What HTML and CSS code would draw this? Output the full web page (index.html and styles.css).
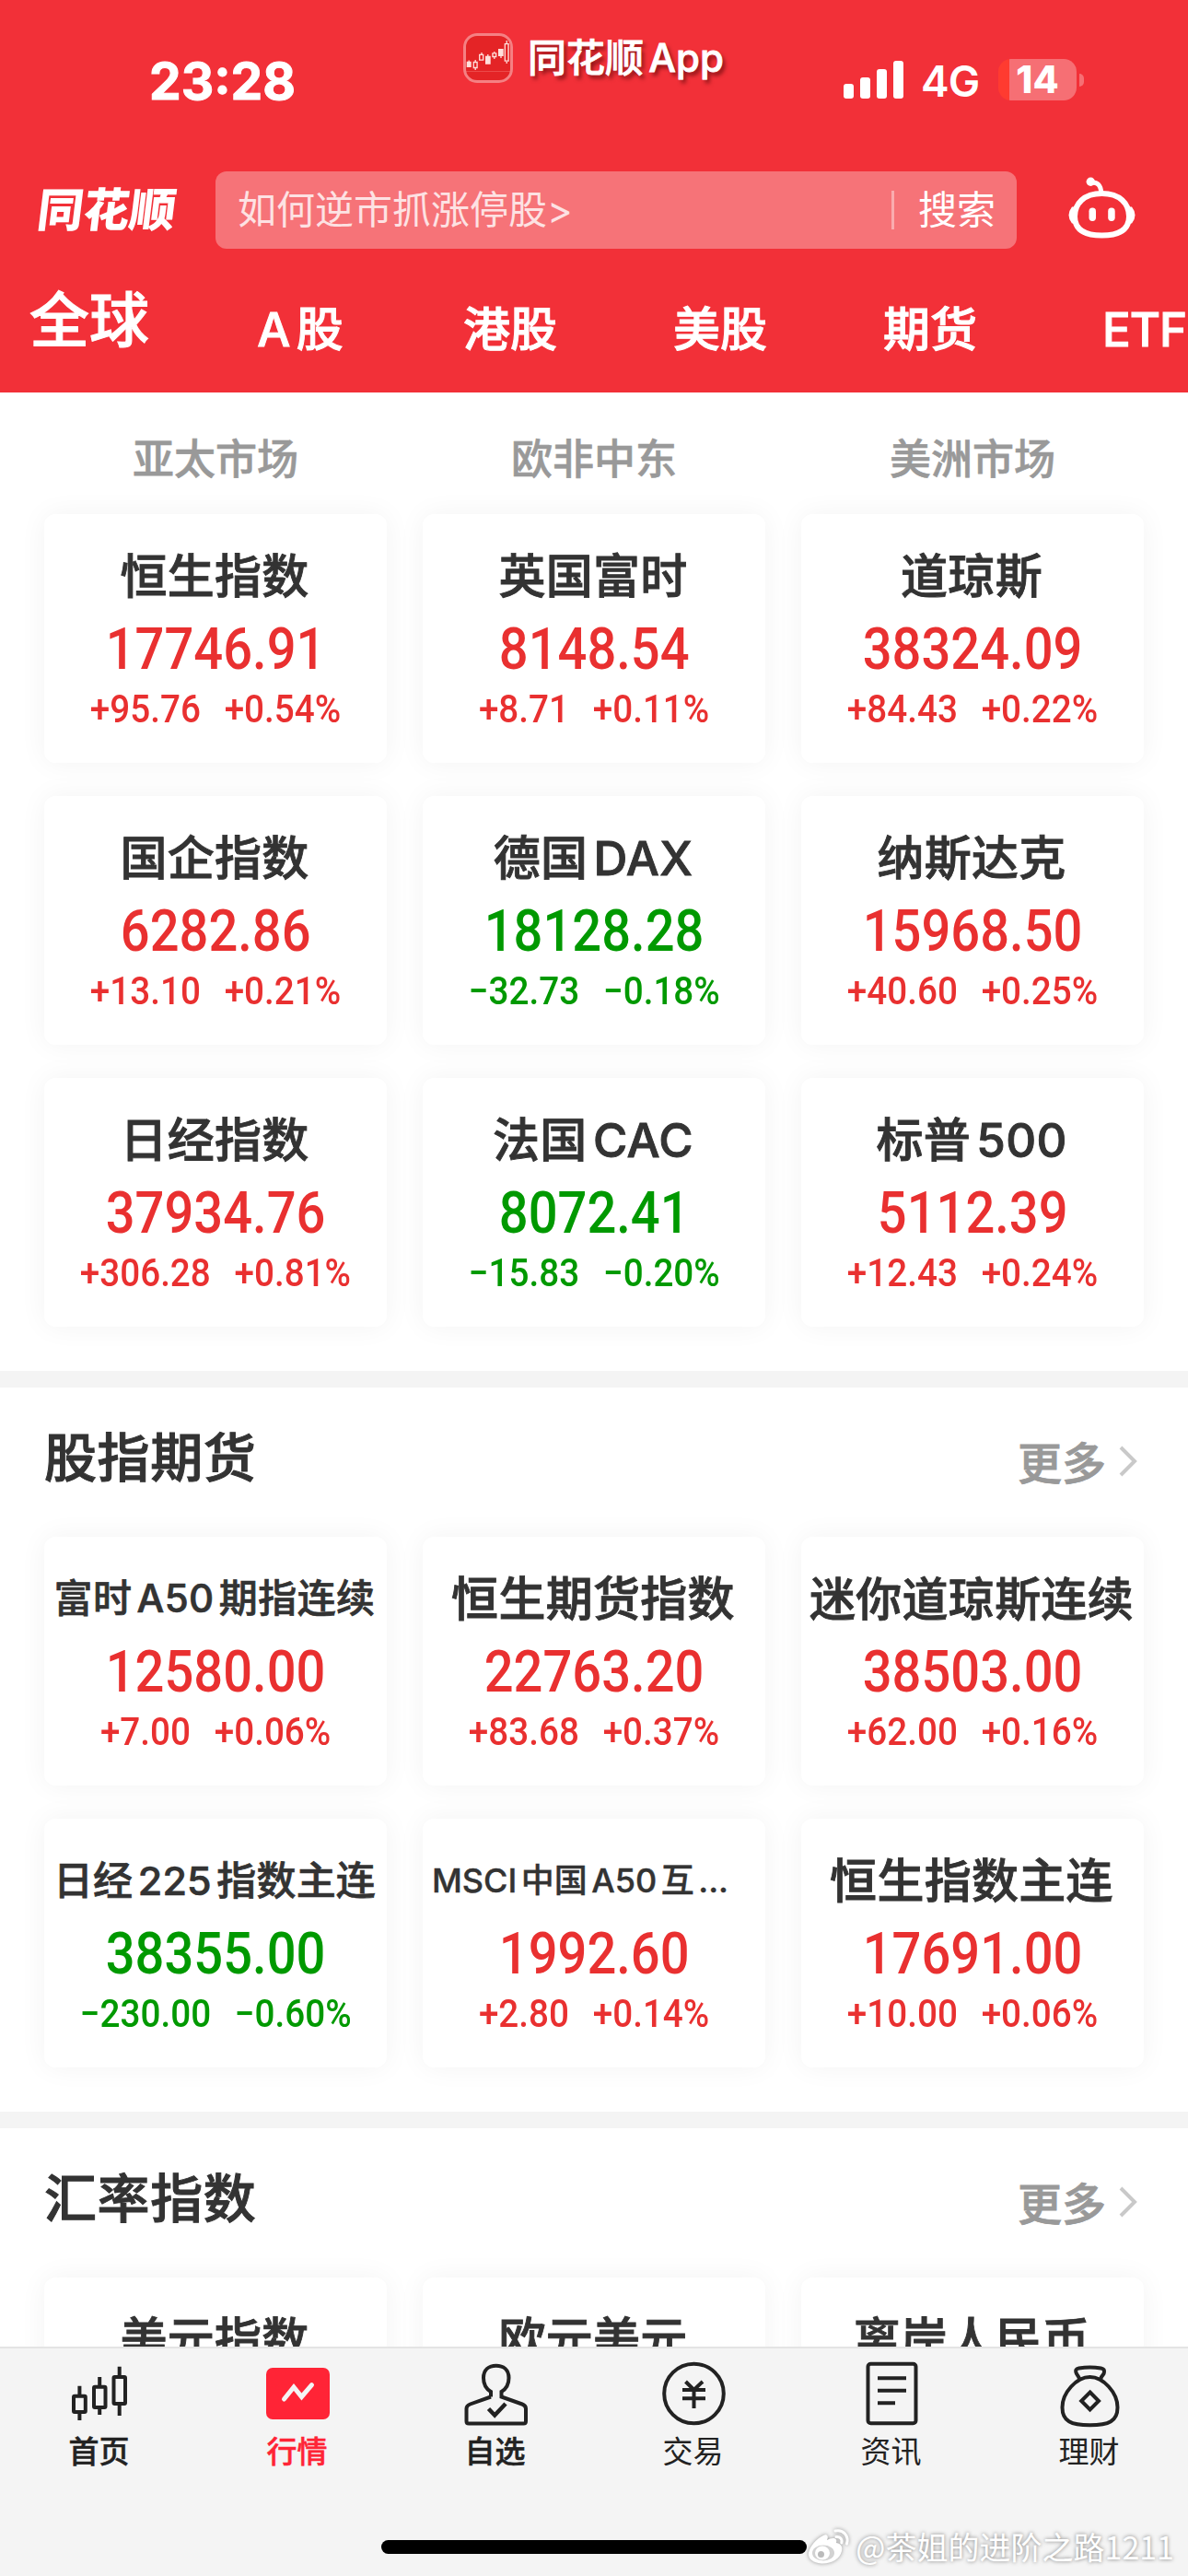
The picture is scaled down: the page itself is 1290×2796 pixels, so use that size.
FILE: index.html
```
<!DOCTYPE html>
<html lang="zh-CN">
<head>
	<meta charset="utf-8">
	<title>同花顺 - 全球行情</title>
	<link rel="stylesheet" href="styles.css">
</head>
<body>
	<header class="header">
		<div class="status-bar">
			<div class="time">23:28</div>
			<div class="app-tag">
				<svg class="app-icon" viewBox="0 0 54 54">
					<rect width="54" height="54" rx="15" fill="#e42426"/>
					<path d="M2 41.500H52" stroke="#ec4a4a" stroke-width="1"/>
					<path d="M6.200 29.500V31M13.200 29V31M13.200 38V40M20 21V23M26.800 23V25M33.800 20V21.500M33.800 26V28M41 25V27M47.200 8V11M47.200 31V33" stroke="#ffe0dc" stroke-width="1.300"/>
					<path d="M3.700 30.700H8.700V37H3.700ZM24 24.700H29.700V33.700H24ZM38 17H43.700V25H38Z" fill="#ffe0dc"/>
					<path d="M11.300 31.500H15.100V37.500H11.300ZM17.700 23.300H21.700V29.100H17.700ZM31.900 21.900H35.700V25.500H31.900ZM45.300 11.600H49.100V30.200H45.300Z" fill="none" stroke="#ffe0dc" stroke-width="1.300"/>
					<rect x="1.500" y="1.500" width="51" height="51" rx="13.500" fill="none" stroke="#f58083" stroke-width="3"/>
				</svg>
				<span>同花顺App</span>
			</div>
			<div class="signals">
				<svg class="bars" viewBox="0 0 66 42" fill="#fff">
					<rect x="0" y="25" width="11" height="16" rx="3"/>
					<rect x="18" y="18" width="11" height="23" rx="3"/>
					<rect x="36" y="9" width="11" height="32" rx="3"/>
					<rect x="54" y="0" width="11" height="41" rx="3"/>
				</svg>
				<span class="network">4G</span>
				<div class="battery">14</div>
				<div class="battery-tip"></div>
			</div>
		</div>
		<div class="search-row">
			<div class="logo">同花顺</div>
			<div class="search">
				<span class="hint">如何逆市抓涨停股&gt;</span>
				<span class="search-btn">搜索</span>
			</div>
			<svg class="robot" viewBox="0 0 80 76" fill="none" stroke="#fff" stroke-width="6">
				<path d="M40.500 22C60 22 70 33 70 47 70 61 60 67.500 40.500 67.500S11 61 11 47C11 33 21 22 40.500 22Z"/>
				<path d="M29 10Q39 9 39.700 21" stroke-width="5"/>
				<circle cx="28.300" cy="9.300" r="4.700" fill="#fff" stroke="none"/>
				<path d="M8 36.500H12V54.500H8Q4.500 50 4.500 45.500T8 36.500ZM73 36.500H69V54.500H73Q76.500 50 76.500 45.500T73 36.500Z" fill="#fff" stroke="none"/>
				<rect x="26.500" y="37.500" width="7.500" height="14.500" rx="3.700" fill="#fff" stroke="none"/>
				<rect x="47.200" y="37.500" width="7.500" height="14.500" rx="3.700" fill="#fff" stroke="none"/>
			</svg>
		</div>
		<nav class="tabs">
			<span class="current">全球</span>
			<span>A股</span>
			<span>港股</span>
			<span>美股</span>
			<span>期货</span>
			<span class="last">ETF</span>
		</nav>
	</header>

	<main class="content">
		<section class="section">
			<div class="regions">
				<span>亚太市场</span>
				<span>欧非中东</span>
				<span>美洲市场</span>
			</div>
			<div class="grid">
				<div class="card up"><h3>恒生指数</h3><b>17746.91</b><p><i>+95.76</i><i>+0.54%</i></p></div>
				<div class="card up"><h3>英国富时</h3><b>8148.54</b><p><i>+8.71</i><i>+0.11%</i></p></div>
				<div class="card up"><h3>道琼斯</h3><b>38324.09</b><p><i>+84.43</i><i>+0.22%</i></p></div>
				<div class="card up"><h3>国企指数</h3><b>6282.86</b><p><i>+13.10</i><i>+0.21%</i></p></div>
				<div class="card down"><h3>德国DAX</h3><b>18128.28</b><p><i>−32.73</i><i>−0.18%</i></p></div>
				<div class="card up"><h3>纳斯达克</h3><b>15968.50</b><p><i>+40.60</i><i>+0.25%</i></p></div>
				<div class="card up"><h3>日经指数</h3><b>37934.76</b><p><i>+306.28</i><i>+0.81%</i></p></div>
				<div class="card down"><h3>法国CAC</h3><b>8072.41</b><p><i>−15.83</i><i>−0.20%</i></p></div>
				<div class="card up"><h3>标普500</h3><b>5112.39</b><p><i>+12.43</i><i>+0.24%</i></p></div>
			</div>
		</section>

		<section class="section">
			<div class="section-head">
				<h2>股指期货</h2>
				<span class="more">更多</span>
				<svg class="arrow" viewBox="0 0 20 34"><path d="M2 2L17 17L2 32" fill="none" stroke="#c9c9c9" stroke-width="4"/></svg>
			</div>
			<div class="grid">
				<div class="card up"><h3 class="medium">富时A50期指连续</h3><b>12580.00</b><p><i>+7.00</i><i>+0.06%</i></p></div>
				<div class="card up"><h3>恒生期货指数</h3><b>22763.20</b><p><i>+83.68</i><i>+0.37%</i></p></div>
				<div class="card up"><h3 class="long">迷你道琼斯连续</h3><b>38503.00</b><p><i>+62.00</i><i>+0.16%</i></p></div>
				<div class="card down"><h3 class="medium wide">日经225指数主连</h3><b>38355.00</b><p><i>−230.00</i><i>−0.60%</i></p></div>
				<div class="card up"><h3 class="small">MSCI中国A50互...</h3><b>1992.60</b><p><i>+2.80</i><i>+0.14%</i></p></div>
				<div class="card up"><h3>恒生指数主连</h3><b>17691.00</b><p><i>+10.00</i><i>+0.06%</i></p></div>
			</div>
		</section>

		<section class="section">
			<div class="section-head">
				<h2>汇率指数</h2>
				<span class="more">更多</span>
				<svg class="arrow" viewBox="0 0 20 34"><path d="M2 2L17 17L2 32" fill="none" stroke="#c9c9c9" stroke-width="4"/></svg>
			</div>
			<div class="grid">
				<div class="card up"><h3>美元指数</h3></div>
				<div class="card up"><h3>欧元美元</h3></div>
				<div class="card up"><h3>离岸人民币</h3></div>
			</div>
		</section>
	</main>

	<footer class="footer">
		<nav class="menu">
			<a class="bold">
				<svg viewBox="0 0 72 72">
					<rect x="8" y="36.700" width="12.800" height="17.300" rx="1"/>
					<rect x="30" y="26.700" width="12.500" height="22.300" rx="1"/>
					<rect x="51.500" y="16" width="12.500" height="29" rx="1"/>
					<path d="M14.400 25.700V36M14.400 55V63M36.200 16V26M36.200 50V57M57.700 4.700V15M57.700 46V58"/>
				</svg>
				首页
			</a>
			<a class="bold active">
				<svg viewBox="0 0 72 72">
					<rect x="2" y="6" width="69" height="56" rx="7" fill="#ff2436" stroke="none"/>
					<path d="M21.500 40L32 27L40.500 37.500L51.500 24.700" stroke="#f4f4f4" stroke-width="5" stroke-linecap="round"/>
				</svg>
				行情
			</a>
			<a class="bold">
				<svg viewBox="0 0 72 72">
					<path d="M31 37.500V32C26 29 23 23 23 17 23 8 29 3.700 36.700 3.700S50.500 8 50.500 17C50.500 23 47.500 29 42.500 32V37.500L65 45.500Q69 47 69 50.500V64Q69 66.500 66.500 66.500H7Q4.500 66.500 4.500 64V50.500Q4.500 47 8.500 45.500L31 37.500"/>
					<path d="M28.500 50.500L35.200 57.500L47 45" stroke-width="4.500"/>
				</svg>
				自选
			</a>
			<a>
				<svg viewBox="0 0 72 72">
					<circle cx="36.500" cy="34" r="32.300"/>
					<path d="M27.500 21L36.500 30L46 21M24 30H49M24 39.200H49M36.500 30V50"/>
				</svg>
				交易
			</a>
			<a>
				<svg viewBox="0 0 72 72">
					<rect x="10.500" y="1.700" width="52" height="64.600" rx="3"/>
					<path d="M21 17.300H52M21 30.700H52M21 44.300H40"/>
				</svg>
				资讯
			</a>
			<a>
				<svg viewBox="0 0 72 72">
					<path d="M36.500 16C51 16 66.500 33 66.500 49 66.500 64 57 68.300 36.500 68.300S6.500 64 6.500 49C6.500 33 22 16 36.500 16Z"/>
					<path d="M26 20Q24 15 22 12.500C20 8 22 7 24.500 6.500Q36.500 4.500 48.500 6.500C51 7 53 8 51.500 12.500Q49 15 47.500 20"/>
					<path d="M36.600 32.500L46 42L36.600 51.500L27.200 42Z"/>
				</svg>
				理财
			</a>
		</nav>
		<div class="home-bar"></div>
		<div class="watermark">
			<svg viewBox="0 0 45 39" fill="#fff">
				<path d="M17 7C21 5 23 8 21 12 26 9 33 9 31 15 37 16 38 20 37 24 35 33 25 38 15 37.500 6 37 0 32 1 26 2 19 10 10 17 7Z"/>
				<ellipse cx="17" cy="26" rx="12" ry="8.500" fill="#d2d2d2"/>
				<ellipse cx="16" cy="26" rx="8" ry="7.500"/>
				<circle cx="14.500" cy="27.500" r="3.500" fill="#bbb"/>
				<path d="M30 2C39 0 45 8 42.500 16M31 8.500C35 8 38 11 36.800 15" fill="none" stroke="#fff" stroke-width="3" stroke-linecap="round"/>
			</svg>
			@茶姐的进阶之路1211
		</div>
	</footer>
</body>
</html>
```
FILE: styles.css
```
* {
	box-sizing: border-box;
	margin: 0;
	padding: 0;
}
body {
	width: 1290px;
	height: 2796px;
	display: flex;
	flex-direction: column;
	overflow: hidden;
	background-color: #fff;
	color: #333;
	font-family: Inter, "Noto Sans CJK SC", sans-serif;
	font-weight: 500;
	text-autospace: normal;
	white-space: nowrap;
}
svg {
	display: block;
	flex: none;
	overflow: visible;
}

/* Header */
.header {
	height: 426px;
	flex: none;
	background-color: #f23038;
	color: #fff;
	overflow: hidden;
}
.status-bar {
	height: 186px;
	display: flex;
	align-items: flex-start;
}
.time {
	width: 503px;
	padding: 53px 0 0 162px;
	font-size: 55px;
	line-height: 70px;
	font-weight: 700;
	-webkit-text-stroke: 1px #fff;
}
.app-tag {
	width: 413px;
	display: flex;
	align-items: center;
	gap: 16px;
	margin-top: 36px;
	font-size: 42px;
	line-height: 54px;
	text-shadow: 3px 4px 4px rgba(70, 0, 0, 0.6);
	-webkit-text-stroke: 0.8px #fff;
}
.app-icon {
	width: 54px;
	height: 54px;
}
.signals {
	display: flex;
	align-items: center;
	height: 45px;
	margin-top: 64px;
}
.bars {
	width: 66px;
	height: 42px;
}
.network {
	width: 82px;
	margin-left: 18px;
	margin-right: 2px;
	padding-top: 4px;
	font-size: 46px;
	line-height: 45px;
	letter-spacing: -1px;
	font-weight: 600;
}
.battery {
	width: 85px;
	height: 45px;
	border-radius: 14px;
	background: linear-gradient(to right, #ff3b30 12px, #f66f74 12px);
	font-size: 41px;
	line-height: 45px;
	text-align: center;
	font-weight: 800;
}
.battery-tip {
	width: 5px;
	height: 14px;
	margin-left: 3px;
	border-radius: 0 5px 5px 0;
	background-color: #f66f74;
}
.search-row {
	height: 84px;
	display: flex;
	align-items: center;
	padding-left: 41px;
}
.logo {
	width: 193px;
	font-size: 50px;
	line-height: 84px;
	font-weight: 900;
	transform: skewX(-7deg);
}
.search {
	width: 870px;
	height: 84px;
	display: flex;
	align-items: center;
	justify-content: space-between;
	padding: 0 23px 0 24px;
	border-radius: 12px;
	background-color: #f67378;
	font-size: 42px;
	line-height: 42px;
	font-weight: 400;
}
.hint {
	color: #fde2e3;
}
.search-btn {
	padding-left: 26px;
	border-left: 3px solid #faacaf;
}
.robot {
	width: 80px;
	height: 76px;
	margin: -4px 0 0 52px;
}
.tabs {
	display: flex;
	align-items: center;
	height: 156px;
	padding: 19px 0 0 32px;
	font-size: 51px;
	line-height: 70px;
	-webkit-text-stroke: 1px #fff;
}
.tabs span {
	width: 228px;
	flex: none;
	text-align: center;
}
.tabs .current {
	width: 180px;
	margin-bottom: 20px;
	font-size: 65px;
	text-align: left;
}
.tabs .last {
	width: 91px;
	margin-left: 73px;
	text-align: left;
	letter-spacing: -1px;
}

/* Quotes */
.content {
	flex: 1;
	min-height: 0;
	overflow: hidden;
}
.section {
	padding: 0 48px 48px;
	border-bottom: 18px solid #f4f4f4;
}
.regions {
	display: grid;
	grid-template-columns: repeat(3, 372px);
	gap: 39px;
	height: 132px;
	line-height: 145px;
	font-size: 45px;
	color: #999;
	text-align: center;
	-webkit-text-stroke: 0.6px #999;
}
.section-head {
	display: flex;
	align-items: center;
	height: 162px;
	padding: 0 7px 2px 0;
}
.section-head h2 {
	flex: 1;
	font-size: 57px;
	line-height: 80px;
	margin-bottom: 7px;
	font-weight: 500;
	letter-spacing: 0.6px;
	-webkit-text-stroke: 1px #333;
}
.more {
	margin-bottom: 3px;
	font-size: 48px;
	color: #999;
	-webkit-text-stroke: 0.8px #999;
}
.arrow {
	width: 20px;
	height: 34px;
	margin-left: 14px;
}
.grid {
	display: grid;
	grid-template-columns: repeat(3, 372px);
	grid-auto-rows: 270px;
	gap: 36px 39px;
}
.card {
	display: flex;
	flex-direction: column;
	align-items: center;
	padding-top: 33px;
	border-radius: 12px;
	background-color: #fff;
	box-shadow: 0 0 30px rgba(0, 0, 0, 0.05);
}
.card h3 {
	height: 70px;
	padding-right: 2px;
	font-size: 51px;
	line-height: 70px;
	font-weight: 500;
	color: #333;
	letter-spacing: 0.3px;
	-webkit-text-stroke: 0.9px #333;
}
.card h3.long {
	font-size: 50px;
}
.card h3.medium {
	font-size: 42px;
	letter-spacing: 0.4px;
	line-height: 68px;
	-webkit-text-stroke-width: 0.7px;
}
.card h3.wide {
	font-size: 43px;
	letter-spacing: 0.2px;
}
.card h3.small {
	font-size: 36px;
	line-height: 68px;
	letter-spacing: 0;
	padding-right: 30px;
	-webkit-text-stroke-width: 0.4px;
}
/* Narrow digits */
.card b, .card i {
	font-family: Roboto, sans-serif;
	font-weight: 500;
	font-style: normal;
}
.card b {
	font-size: 63px;
	line-height: 80px;
	margin-top: 4px;
	transform: scaleX(0.89);
}
.card p {
	display: flex;
	gap: 28px;
	font-size: 42px;
	line-height: 50px;
	transform: scaleX(0.92);
}
.up {
	color: #e93030;
}
.down {
	color: #009900;
}

/* Bottom menu */
.footer {
	position: relative;
	height: 249px;
	flex: none;
	border-top: 2px solid #e4e4e4;
	background-color: #f4f4f4;
}
.menu {
	display: flex;
	height: 208px;
}
.menu a {
	flex: 1;
	display: flex;
	flex-direction: column;
	align-items: center;
	padding-top: 15px;
	font-size: 33px;
	line-height: 50px;
	font-weight: 400;
	color: #222;
}
.menu svg {
	width: 72px;
	height: 72px;
	fill: none;
	stroke: #222;
	stroke-width: 4;
}
.menu .bold {
	font-weight: 500;
	-webkit-text-stroke: 0.5px;
}
.menu .active {
	color: #ff2436;
}
.home-bar {
	width: 462px;
	height: 15px;
	margin: 0 auto;
	border-radius: 8px;
	background-color: #000;
}
.watermark {
	position: absolute;
	right: 15px;
	bottom: 8px;
	display: flex;
	align-items: center;
	gap: 7px;
	font-family: "Noto Sans CJK SC", sans-serif;
	font-size: 34px;
	line-height: 48px;
	font-weight: 400;
	text-autospace: no-autospace;
	color: #fff;
	text-shadow: 0 0 4px rgba(0, 0, 0, 0.5);
}
.watermark svg {
	width: 45px;
	height: 39px;
	filter: drop-shadow(0 0 2px rgba(0, 0, 0, 0.4));
}
```
